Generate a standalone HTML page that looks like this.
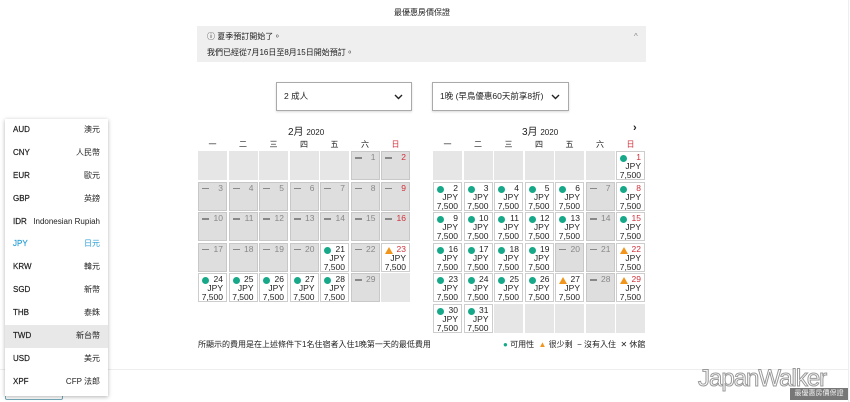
<!DOCTYPE html>
<html><head><meta charset="utf-8"><style>
*{margin:0;padding:0;box-sizing:border-box}
body{width:850px;height:402px;background:#fff;font-family:"Liberation Sans","Noto Sans CJK TC",sans-serif;color:#222;position:relative;overflow:hidden}
.abs{position:absolute}
.t{font-size:8px}
.sel{position:absolute;top:82px;height:29px;border:1px solid #aaa;box-shadow:0 1px 2px rgba(0,0,0,.15);background:#fff;font-size:8.5px;padding:0 7px;line-height:27px;white-space:nowrap}
.sel svg{position:absolute;right:8px;top:11px}
.grid{position:absolute;top:151px;display:grid;grid-template-columns:repeat(7,29px);grid-auto-rows:29px;gap:1.5px}
.grid>div{position:relative;font-size:8.5px;line-height:9px}
.e{background:#e6e6e6}
.u{background:#dedede;border:1px solid #c8c8c8;color:#888}
.u::before{content:"";position:absolute;left:3px;top:5px;width:7px;height:1.5px;background:#888}
.a,.w{background:#fff;border:1px solid #cdcdcd}
.a::before{content:"";position:absolute;left:3px;top:3px;width:7px;height:7px;border-radius:50%;background:#17a88a}
.w::before{content:"";position:absolute;left:3px;top:3px;border-left:4px solid transparent;border-right:4px solid transparent;border-bottom:7px solid #f1951c}
.grid span{position:absolute;right:3px}
.n{top:1px}.j{top:10px}.p{top:19px}
.r .n{color:#d0303a}
.wd{position:absolute;top:139px;font-size:8px;width:29px;text-align:center}
.cur{position:absolute;left:5px;top:119px;width:103px;height:277px;background:#fff;box-shadow:0 1px 4px rgba(0,0,0,.3);font-size:8px}
.cur div{height:22.9px;line-height:22.9px;padding:0 8px;display:flex;justify-content:space-between}
.cur b{font-weight:normal;-webkit-text-stroke:0.2px currentColor}
</style></head><body>
<div class="abs" style="left:848px;top:0;width:1px;height:402px;background:#eee"></div>
<div class="abs" style="left:0;top:369px;width:848px;height:1px;background:#eee"></div>
<div class="abs t" style="left:0;width:844px;top:7px;text-align:center">最優惠房價保證</div>
<div class="abs" style="left:197px;top:26px;width:449px;height:36px;background:#efefef"></div>
<div class="abs t" style="left:207px;top:31px">ⓘ 夏季預訂開始了。</div>
<div class="abs t" style="left:207px;top:47px">我們已經從7月16日至8月15日開始預訂。</div>
<div class="abs t" style="left:634px;top:32px;color:#888">^</div>
<div class="sel" style="left:276px;width:136px">2 成人<svg width="9" height="6"><path d="M1 1l3.5 3.5L8 1" stroke="#222" stroke-width="1.4" fill="none"/></svg></div>
<div class="sel" style="left:432px;width:137px">1晚 (早鳥優惠60天前享8折)<svg width="9" height="6"><path d="M1 1l3.5 3.5L8 1" stroke="#222" stroke-width="1.4" fill="none"/></svg></div>
<div class="abs" style="left:288px;top:123px;font-size:10px">2月 <span style="font-size:8px">2020</span></div>
<div class="abs" style="left:522px;top:123px;font-size:10px">3月 <span style="font-size:8px">2020</span></div>
<div class="abs" style="left:633px;top:122px;font-size:11px;font-weight:bold">›</div>
<div class="wd" style="left:198px">一</div><div class="wd" style="left:228.5px">二</div><div class="wd" style="left:259px">三</div><div class="wd" style="left:289.5px">四</div><div class="wd" style="left:320px">五</div><div class="wd" style="left:350.5px">六</div><div class="wd" style="left:381px;color:#d0303a">日</div>
<div class="wd" style="left:433px">一</div><div class="wd" style="left:463.5px">二</div><div class="wd" style="left:494px">三</div><div class="wd" style="left:524.5px">四</div><div class="wd" style="left:555px">五</div><div class="wd" style="left:585.5px">六</div><div class="wd" style="left:616px;color:#d0303a">日</div>
<div class="grid" style="left:198px">
<div class="e"></div><div class="e"></div><div class="e"></div><div class="e"></div><div class="e"></div><div class="u"><span class="n">1</span></div><div class="u r"><span class="n">2</span></div>
<div class="u"><span class="n">3</span></div><div class="u"><span class="n">4</span></div><div class="u"><span class="n">5</span></div><div class="u"><span class="n">6</span></div><div class="u"><span class="n">7</span></div><div class="u"><span class="n">8</span></div><div class="u r"><span class="n">9</span></div>
<div class="u"><span class="n">10</span></div><div class="u"><span class="n">11</span></div><div class="u"><span class="n">12</span></div><div class="u"><span class="n">13</span></div><div class="u"><span class="n">14</span></div><div class="u"><span class="n">15</span></div><div class="u r"><span class="n">16</span></div>
<div class="u"><span class="n">17</span></div><div class="u"><span class="n">18</span></div><div class="u"><span class="n">19</span></div><div class="u"><span class="n">20</span></div><div class="a"><span class="n">21</span><span class="j">JPY</span><span class="p">7,500</span></div><div class="u"><span class="n">22</span></div><div class="w r"><span class="n">23</span><span class="j">JPY</span><span class="p">7,500</span></div>
<div class="a"><span class="n">24</span><span class="j">JPY</span><span class="p">7,500</span></div><div class="a"><span class="n">25</span><span class="j">JPY</span><span class="p">7,500</span></div><div class="a"><span class="n">26</span><span class="j">JPY</span><span class="p">7,500</span></div><div class="a"><span class="n">27</span><span class="j">JPY</span><span class="p">7,500</span></div><div class="a"><span class="n">28</span><span class="j">JPY</span><span class="p">7,500</span></div><div class="u"><span class="n">29</span></div><div class="e"></div>
</div>
<div class="grid" style="left:433px">
<div class="e"></div><div class="e"></div><div class="e"></div><div class="e"></div><div class="e"></div><div class="e"></div><div class="a r"><span class="n">1</span><span class="j">JPY</span><span class="p">7,500</span></div>
<div class="a"><span class="n">2</span><span class="j">JPY</span><span class="p">7,500</span></div><div class="a"><span class="n">3</span><span class="j">JPY</span><span class="p">7,500</span></div><div class="a"><span class="n">4</span><span class="j">JPY</span><span class="p">7,500</span></div><div class="a"><span class="n">5</span><span class="j">JPY</span><span class="p">7,500</span></div><div class="a"><span class="n">6</span><span class="j">JPY</span><span class="p">7,500</span></div><div class="u"><span class="n">7</span></div><div class="a r"><span class="n">8</span><span class="j">JPY</span><span class="p">7,500</span></div>
<div class="a"><span class="n">9</span><span class="j">JPY</span><span class="p">7,500</span></div><div class="a"><span class="n">10</span><span class="j">JPY</span><span class="p">7,500</span></div><div class="a"><span class="n">11</span><span class="j">JPY</span><span class="p">7,500</span></div><div class="a"><span class="n">12</span><span class="j">JPY</span><span class="p">7,500</span></div><div class="a"><span class="n">13</span><span class="j">JPY</span><span class="p">7,500</span></div><div class="u"><span class="n">14</span></div><div class="a r"><span class="n">15</span><span class="j">JPY</span><span class="p">7,500</span></div>
<div class="a"><span class="n">16</span><span class="j">JPY</span><span class="p">7,500</span></div><div class="a"><span class="n">17</span><span class="j">JPY</span><span class="p">7,500</span></div><div class="a"><span class="n">18</span><span class="j">JPY</span><span class="p">7,500</span></div><div class="a"><span class="n">19</span><span class="j">JPY</span><span class="p">7,500</span></div><div class="u"><span class="n">20</span></div><div class="u"><span class="n">21</span></div><div class="w r"><span class="n">22</span><span class="j">JPY</span><span class="p">7,500</span></div>
<div class="a"><span class="n">23</span><span class="j">JPY</span><span class="p">7,500</span></div><div class="a"><span class="n">24</span><span class="j">JPY</span><span class="p">7,500</span></div><div class="a"><span class="n">25</span><span class="j">JPY</span><span class="p">7,500</span></div><div class="a"><span class="n">26</span><span class="j">JPY</span><span class="p">7,500</span></div><div class="w"><span class="n">27</span><span class="j">JPY</span><span class="p">7,500</span></div><div class="u"><span class="n">28</span></div><div class="w r"><span class="n">29</span><span class="j">JPY</span><span class="p">7,500</span></div>
<div class="a"><span class="n">30</span><span class="j">JPY</span><span class="p">7,500</span></div><div class="a"><span class="n">31</span><span class="j">JPY</span><span class="p">7,500</span></div><div class="e"></div><div class="e"></div><div class="e"></div><div class="e"></div><div class="e"></div>
</div>
<div class="abs t" style="left:198px;top:339px">所顯示的費用是在上述條件下1名住宿者入住1晚第一天的最低費用</div>
<div class="abs t" style="left:503px;top:339px"><span style="color:#17a88a">●</span> 可用性 &nbsp;<span style="color:#f1951c">▲</span> 很少剩 &nbsp;− 沒有入住 &nbsp;✕ 休館</div>
<div class="abs" style="left:5px;top:374px;width:58px;height:26px;border:1px solid #7ab;border-radius:2px"></div>
<div class="cur">
<div><b>AUD</b><span>澳元</span></div><div><b>CNY</b><span>人民幣</span></div><div><b>EUR</b><span>歐元</span></div><div><b>GBP</b><span>英鎊</span></div><div><b>IDR</b><span>Indonesian Rupiah</span></div><div style="color:#2a9fd6"><b>JPY</b><span>日元</span></div><div><b>KRW</b><span>韓元</span></div><div><b>SGD</b><span>新幣</span></div><div><b>THB</b><span>泰銖</span></div><div style="background:#e8e8e8"><b>TWD</b><span>新台幣</span></div><div><b>USD</b><span>美元</span></div><div><b>XPF</b><span>CFP 法郎</span></div>
</div>
<div class="abs" style="left:698px;top:365px;font-size:24px;color:#fff;-webkit-text-stroke:1px #999;letter-spacing:-1px">JapanWalker</div>
<div class="abs" style="left:790px;top:388px;width:58px;height:12px;background:#777;color:#eee;font-size:7px;text-align:center;line-height:12px">最優惠房價保證</div>
</body></html>
